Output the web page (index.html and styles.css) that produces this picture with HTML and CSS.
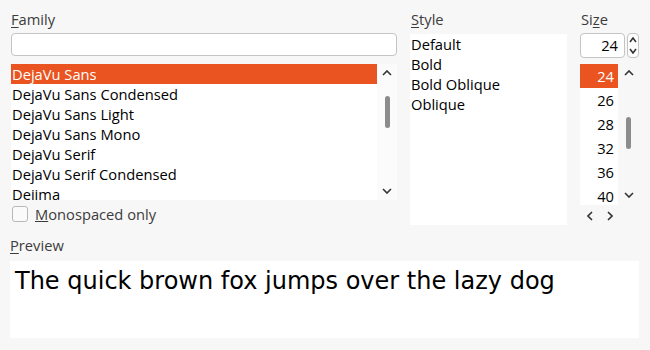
FILE: index.html
```html
<!DOCTYPE html>
<html lang="en">

<head>
  <meta charset="UTF-8">
  <title>Select Font</title>
  <link rel="stylesheet" href="styles.css">
</head>

<body>
  <div class="chooser">
    <div class="top">
      <!-- family column -->
      <div class="col col-family">
        <div class="label"><u>F</u>amily</div>
        <div class="search"></div>
        <div class="list-wrap family-wrap">
          <ul class="list family-list">
            <li class="selected">DejaVu Sans</li>
            <li>DejaVu Sans Condensed</li>
            <li>DejaVu Sans Light</li>
            <li>DejaVu Sans Mono</li>
            <li>DejaVu Serif</li>
            <li>DejaVu Serif Condensed</li>
            <li>Dejima</li>
          </ul>
          <div class="scrollbar family-scroll">
            <svg class="chev" width="10" height="6" viewBox="0 0 10 6"><path d="M1 5 L5 1 L9 5" /></svg>
            <div class="thumb"></div>
            <svg class="chev chev-down" width="10" height="6" viewBox="0 0 10 6"><path d="M1 1 L5 5 L9 1" /></svg>
          </div>
        </div>
        <label class="check">
          <span class="box"></span>
          <span><u>M</u>onospaced only</span>
        </label>
      </div>

      <!-- style column -->
      <div class="col col-style">
        <div class="label"><u>S</u>tyle</div>
        <ul class="list style-list">
          <li>Default</li>
          <li>Bold</li>
          <li>Bold Oblique</li>
          <li>Oblique</li>
        </ul>
      </div>

      <!-- size column -->
      <div class="col col-size">
        <div class="label">Si<u>z</u>e</div>
        <div class="spin">
          <div class="spin-entry">24</div>
          <div class="spin-buttons">
            <svg width="8" height="6" viewBox="0 0 8 6"><path d="M1 5 L4 1 L7 5" /></svg>
            <svg width="8" height="6" viewBox="0 0 8 6"><path d="M1 1 L4 5 L7 1" /></svg>
          </div>
        </div>
        <div class="list-wrap size-wrap">
          <ul class="list size-list">
            <li class="selected">24</li>
            <li>26</li>
            <li>28</li>
            <li>32</li>
            <li>36</li>
            <li>40</li>
          </ul>
          <div class="scrollbar size-scroll">
            <svg class="chev" width="10" height="6" viewBox="0 0 10 6"><path d="M1 5 L5 1 L9 5" /></svg>
            <div class="thumb"></div>
            <svg class="chev chev-down" width="10" height="6" viewBox="0 0 10 6"><path d="M1 1 L5 5 L9 1" /></svg>
          </div>
        </div>
        <div class="hscroll">
          <svg width="6" height="10" viewBox="0 0 6 10"><path d="M5 1 L1 5 L5 9" /></svg>
          <svg width="6" height="10" viewBox="0 0 6 10"><path d="M1 1 L5 5 L1 9" /></svg>
        </div>
      </div>
    </div>

    <div class="label preview-label"><u>P</u>review</div>
    <div class="preview">The quick brown fox jumps over the lazy dog</div>
  </div>
</body>

</html>
```

FILE: styles.css
```css
body {
  margin: 0;
  background: #f7f7f7;
  font-family: "Open Sans", "Noto Sans", sans-serif;
  font-size: 14.7px;
  color: #000;
}

.chooser {
  padding: 9px 11px 0 10px;
}

.top {
  display: flex;
  gap: 13px;
}

.col {
  display: flex;
  flex-direction: column;
}

.col-family {
  width: 387px;
}

.col-style {
  width: 157px;
}

.col-size {
  width: 59px;
}

.label {
  color: #3c3c3c;
  height: 24px;
  line-height: 20px;
  padding-left: 1px;
}

.label u {
  text-underline-offset: 2px;
}

.search {
  height: 21px;
  margin-left: 1px;
  background: #fff;
  border: 1px solid #c4c4c4;
  border-radius: 4px;
}

.list {
  list-style: none;
  margin: 0;
  padding: 0;
  background: #fff;
  overflow: hidden;
}

.list li {
  height: 20px;
  line-height: 20px;
  padding-left: 1px;
  white-space: nowrap;
}

.list li.selected {
  background: #e95420;
  color: #fff;
}

.list-wrap {
  display: flex;
}

.family-wrap {
  margin-top: 8px;
  margin-left: 1px;
  height: 136px;
}

.family-list {
  flex: 1;
}

.scrollbar {
  width: 20px;
  background: #fbfbfb;
  display: flex;
  flex-direction: column;
  align-items: center;
}

.scrollbar path,
.spin-buttons path,
.hscroll path {
  fill: none;
  stroke: #333;
  stroke-width: 1.6;
}

.chev {
  margin-top: 6px;
}

.chev-down {
  margin-top: auto;
  margin-bottom: 6px;
}

.thumb {
  width: 5px;
  background: #8c8c8c;
  border-radius: 3px;
}

.family-scroll .thumb {
  margin-top: 20px;
  height: 32px;
}

.check {
  display: flex;
  align-items: center;
  gap: 7px;
  margin-top: 4px;
  margin-left: 2px;
  color: #3c3c3c;
}

.check .box {
  width: 14px;
  height: 14px;
  border: 1px solid #b8b8b8;
  border-radius: 3px;
  background: #fafafa;
}

.style-list {
  height: 191px;
  margin-top: 1px;
}

.spin {
  display: flex;
  gap: 2px;
  height: 25px;
}

.spin-entry {
  width: 37px;
  background: #fff;
  border: 1px solid #c4c4c4;
  border-radius: 4px;
  text-align: right;
  padding-right: 6px;
  line-height: 23px;
}

.spin-buttons {
  width: 10px;
  border: 1px solid #c4c4c4;
  border-radius: 4px;
  background: #fdfdfd;
  display: flex;
  flex-direction: column;
  align-items: center;
  justify-content: space-around;
}

.size-wrap {
  margin-top: 6px;
  height: 141px;
}

.size-list {
  width: 38px;
}

.size-list li {
  height: 24px;
  line-height: 24px;
  text-align: right;
  padding-right: 4px;
}

.size-scroll {
  background: transparent;
  flex: 1;
}

.size-scroll .thumb {
  margin-top: 41px;
  height: 32px;
}

.size-scroll .chev-down {
  margin-bottom: 7px;
}

.hscroll {
  display: flex;
  gap: 14px;
  padding-left: 7px;
  margin-top: 6px;
}

.preview-label {
  margin-top: 10px;
  padding-left: 0;
  height: 26px;
}

.preview {
  background: #fff;
  height: 77px;
  font-family: "DejaVu Sans", sans-serif;
  font-size: 24px;
  padding-left: 5px;
  line-height: 40px;
}
```
